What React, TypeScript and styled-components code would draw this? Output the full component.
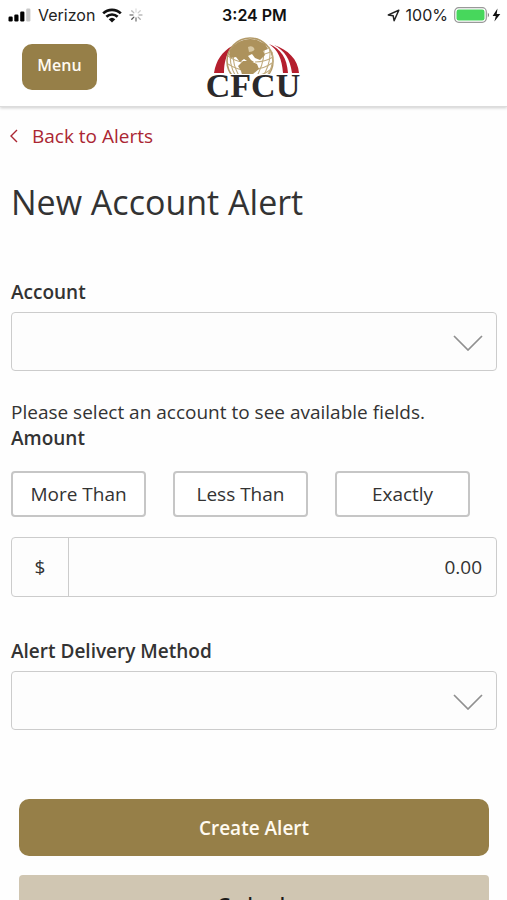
import React from "react";
import styled, { createGlobalStyle } from "styled-components";

const Global = createGlobalStyle`
  * { box-sizing: border-box; }
  html { height: 100%; }
  body {
    margin: 0;
    height: 100%;
    overflow: hidden;
    background: #fefefe;
    color: #333;
    font: 19px/26px "Open Sans", "Noto Sans", sans-serif;
  }
  #root { height: 100%; }
  button, input, select { font: inherit; color: inherit; margin: 0; }
`;

const Screen = styled.div`
  height: 100%;
  overflow: hidden;
`;

const TopBar = styled.div`
  background: #fff;
  border-bottom: 1px solid #dcdcdc;
  box-shadow: 0 1px 3px rgba(0, 0, 0, 0.2);
`;

const StatusBar = styled.div`
  display: grid;
  grid-template-columns: 1fr auto 1fr;
  align-items: center;
  height: 30px;
  padding: 0 6px 0 8px;
  color: #222;
  font: 16px/20px Inter, sans-serif;
`;

const StatusGroup = styled.div<{ $end?: boolean }>`
  display: flex;
  align-items: center;
  justify-content: ${(p) => (p.$end ? "flex-end" : "flex-start")};
  gap: ${(p) => (p.$end ? 6 : 7)}px;
`;

const Clock = styled.time`
  font-weight: 600;
  color: #111;
`;

const NavBar = styled.header`
  display: grid;
  grid-template-columns: 1fr auto 1fr;
  align-items: center;
  height: 76px;
  padding: 0 22px;
`;

const MenuButton = styled.button`
  justify-self: start;
  width: 75px;
  height: 46px;
  margin-bottom: 2px;
  padding: 0 0 4px;
  border: 0;
  border-radius: 10px;
  background: #967f48;
  color: #fffaf0;
  font-size: 16px;
  font-weight: 600;
`;

const Content = styled.main`
  padding: 16px 10px 0 11px;
`;

const BackLink = styled.a`
  display: inline-flex;
  align-items: center;
  gap: 13px;
  margin-left: -2px;
  color: #ab2632;
  text-decoration: none;
`;

const Title = styled.h1`
  margin: 29px 0 53px;
  font-size: 34px;
  font-weight: 400;
  line-height: 48px;
`;

const Label = styled.label`
  display: block;
  font-weight: 600;
`;

const Legend = styled.legend`
  padding: 0;
  font-weight: 600;
`;

const Fieldset = styled.fieldset`
  min-width: 0;
  margin: 0 0 41px;
  padding: 0;
  border: 0;
`;

const SelectWrap = styled.div`
  display: grid;
  align-items: center;
  margin-top: 7px;
  > * { grid-area: 1 / 1; }
  > svg { justify-self: end; margin-right: 13px; pointer-events: none; }
`;

const Select = styled.select`
  appearance: none;
  width: 100%;
  height: 59px;
  padding: 0 56px 0 16px;
  border: 1px solid #ccc;
  border-radius: 4px;
  background: #fdfdfd;
`;

const Hint = styled.p`
  margin: 28px 0 0;
`;

const Options = styled.div`
  display: grid;
  grid-template-columns: repeat(3, 1fr);
  gap: 27px;
  margin: 20px 27px 20px 0;
`;

const OptionButton = styled.button`
  height: 46px;
  padding: 0;
  border: 2px solid #c6c6c6;
  border-radius: 4px;
  background: #fff;
`;

const AmountBox = styled.div`
  display: flex;
  height: 60px;
  border: 1px solid #ccc;
  border-radius: 4px;
  overflow: hidden;
  background: #fdfdfd;
`;

const Currency = styled.span`
  display: grid;
  place-items: center;
  width: 57px;
  border-right: 1px solid #ccc;
  font-weight: 500;
`;

const AmountInput = styled.input`
  flex: 1;
  min-width: 0;
  padding: 0 14px;
  border: 0;
  background: transparent;
  text-align: right;
`;

const Actions = styled.div`
  display: grid;
  gap: 19px;
  margin: 69px 8px 0;
`;

const ActionButton = styled.button<{ $secondary?: boolean }>`
  height: ${(p) => (p.$secondary ? 60 : 57)}px;
  padding: 0;
  border: 0;
  border-radius: ${(p) => (p.$secondary ? 4 : 10)}px;
  background: ${(p) => (p.$secondary ? "#d0c6b2" : "#967f48")};
  color: ${(p) => (p.$secondary ? "#1c1a18" : "#fffaf0")};
  font-weight: 600;
`;

const Signal = () => (
  <svg width="23" height="14" viewBox="0 0 23 14" aria-hidden="true">
    <rect x="0.5" y="8.5" width="4.2" height="5" rx="1.2" />
    <rect x="6.3" y="6.5" width="4.2" height="7" rx="1.2" />
    <rect x="12.2" y="3.5" width="4.2" height="10" rx="1.2" />
    <rect x="18.2" y="0.5" width="4.2" height="13" rx="1.2" fill="#c8c8c8" />
  </svg>
);

const Wifi = () => (
  <svg width="20" height="15" viewBox="0 0 20 15" aria-hidden="true">
    <g fill="none" stroke="#111" strokeWidth="2.7">
      <path d="M1.2 5.4A12.6 12.6 0 0 1 18.8 5.4" />
      <path d="M4.4 8.8A8 8 0 0 1 15.6 8.8" />
    </g>
    <path d="M10 14.6 6.7 11.2A4.8 4.8 0 0 1 13.3 11.2Z" fill="#111" />
  </svg>
);

const Spinner = () => (
  <svg width="14" height="14" viewBox="0 0 14 14" strokeWidth="1.3" strokeLinecap="round" aria-hidden="true">
    {["#ddd", "#ccc", "#bbb", "#aaa", "#777", "#555", "#888", "#bbb"].map((c, i) => (
      <path key={i} d="M7 1v3" stroke={c} transform={`rotate(${i * 45} 7 7)`} />
    ))}
  </svg>
);

const Location = () => (
  <svg width="13" height="13" viewBox="0 0 13 13" aria-hidden="true">
    <path d="M11.8 1.2 1.3 5.9l4.9.9.9 4.9Z" fill="none" stroke="#222" strokeWidth="1.5" strokeLinejoin="round" />
  </svg>
);

const Battery = () => (
  <svg width="47" height="16" viewBox="0 0 47 16" aria-hidden="true">
    <rect x="0.7" y="0.7" width="31.6" height="14.6" rx="4" fill="#fff" stroke="#999" strokeWidth="1.2" />
    <rect x="2.5" y="2.5" width="28" height="11" rx="2.2" fill="#47d75c" />
    <path d="M33.8 5.5q2.4 2.5 0 5Z" fill="#777" />
    <path d="M43.5 1.5 38.6 9h3.2L40.4 14.5 46.3 7h-3.6Z" fill="#111" />
  </svg>
);

const LogoMark = styled.svg`
  overflow: visible;
`;

const LogoText = styled.text`
  font: bold 34px/1 "Liberation Serif", serif;
  fill: #2b292b;
`;

const Logo = () => (
  <LogoMark width="94" height="66" viewBox="0 0 94 66" role="img" aria-label="CFCU">
    <path d="M7 38C9 25 15 17 25 11 19 20 17 28 17 38Z" fill="#b51f2e" />
    <path d="M67 10C81 15 91 24 92 38H85C83 24 78 16 67 10Z" fill="#b51f2e" />
    <path d="M62 9C74 14 80 23 81 38H76C75 24 71 15 62 9Z" fill="#b51f2e" />
    <circle cx="43" cy="26" r="23" fill="#fff" stroke="#b39a68" strokeWidth="1.6" />
    <g fill="none" stroke="#c2ad80" strokeWidth="1.1">
      <path d="M24 15Q21 28 29 42M30 9Q21 24 34 44" />
      <path d="M62 12Q66 26 54 45M56 8Q60 26 47 46M65 17Q68 28 60 41" />
      <path d="M21 21q7 5 14 6M21 29q8 5 15 6M48 27q10 0 18-5M47 34q10 0 18-6M46 41q9 0 17-6M50 20q8 0 15-4" />
    </g>
    <path
      d="M23 15C29 6 40 2 50 5L58 9 61 14 56 16 58 20 53 25 48 23 45 19 41 21 44 25 47 27 43 28 37 24 33 27 29 22 24 23 22 20Z"
      fill="#ad925c"
    />
    <path d="M36 26 43 26 50 29 52 34 46 39 42 46 36 43 34 36 31 31Z" fill="#ad925c" />
    <path d="M41 12q4-2 6 1t-5 4Z" fill="#d8c8a3" />
    <path d="M0 39H94V66H0Z" fill="#fff" />
    <LogoText x="46" y="62" textAnchor="middle">CFCU</LogoText>
  </LogoMark>
);

const BackArrow = () => (
  <svg width="10" height="14" viewBox="0 0 10 14" aria-hidden="true">
    <path d="M8 1 2 7l6 6" fill="none" stroke="#ab2632" strokeWidth="1.4" />
  </svg>
);

const Chevron = () => (
  <svg width="32" height="18" viewBox="0 0 32 18" aria-hidden="true">
    <path d="M2 3 16 17 30 3" fill="none" stroke="#909090" strokeWidth="1.7" />
  </svg>
);

const amountOptions = ["More Than", "Less Than", "Exactly"];

export default function App() {
  return (
    <Screen>
      <Global />
      <TopBar>
        <StatusBar>
          <StatusGroup>
            <Signal />
            <span>Verizon</span>
            <Wifi />
            <Spinner />
          </StatusGroup>
          <Clock>3:24 PM</Clock>
          <StatusGroup $end>
            <Location />
            <span>100%</span>
            <Battery />
          </StatusGroup>
        </StatusBar>
        <NavBar>
          <MenuButton type="button">Menu</MenuButton>
          <Logo />
        </NavBar>
      </TopBar>
      <Content>
        <BackLink href="#alerts">
          <BackArrow />
          Back to Alerts
        </BackLink>
        <Title>New Account Alert</Title>
        <Label htmlFor="account">Account</Label>
        <SelectWrap>
          <Select id="account" defaultValue="">
            <option value="" />
          </Select>
          <Chevron />
        </SelectWrap>
        <Hint>Please select an account to see available fields.</Hint>
        <Fieldset>
          <Legend>Amount</Legend>
          <Options>
            {amountOptions.map((name) => (
              <OptionButton type="button" key={name}>{name}</OptionButton>
            ))}
          </Options>
          <AmountBox>
            <Currency>$</Currency>
            <AmountInput aria-label="Amount" inputMode="decimal" defaultValue="0.00" />
          </AmountBox>
        </Fieldset>
        <Label htmlFor="delivery">Alert Delivery Method</Label>
        <SelectWrap>
          <Select id="delivery" defaultValue="">
            <option value="" />
          </Select>
          <Chevron />
        </SelectWrap>
        <Actions>
          <ActionButton type="submit">Create Alert</ActionButton>
          <ActionButton type="button" $secondary>Go back</ActionButton>
        </Actions>
      </Content>
    </Screen>
  );
}
